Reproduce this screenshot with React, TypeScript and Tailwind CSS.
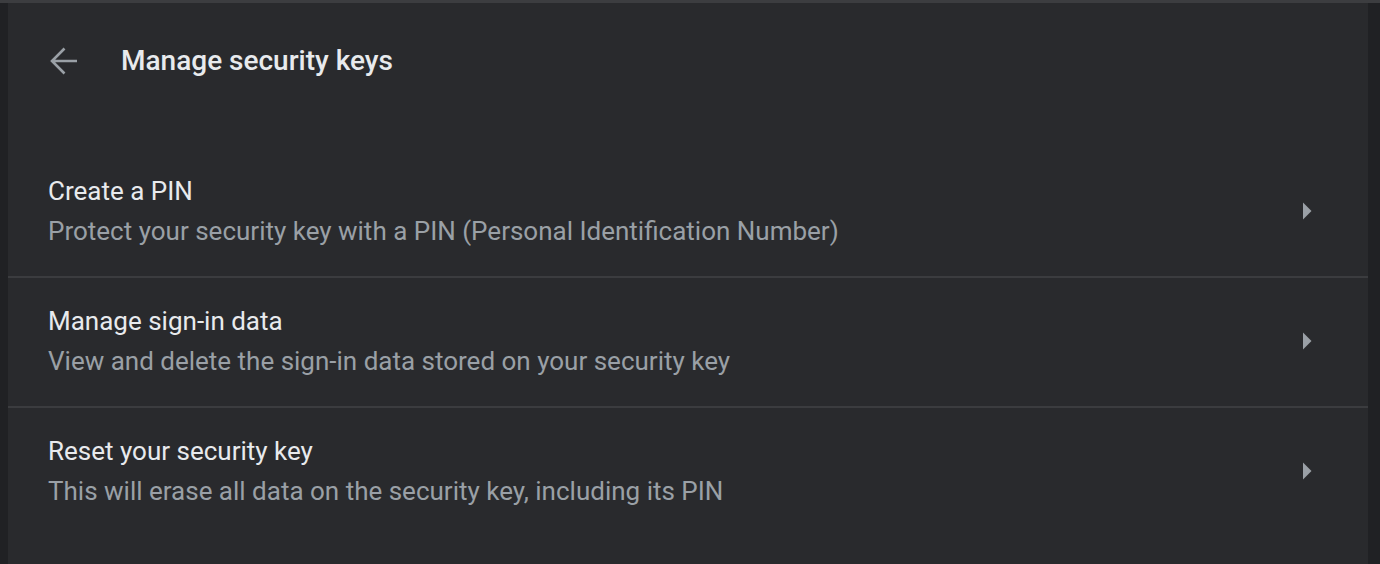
import React from "react";

const rows = [
  {
    title: "Create a PIN",
    sub: "Protect your security key with a PIN (Personal Identification Number)",
  },
  {
    title: "Manage sign-in data",
    sub: "View and delete the sign-in data stored on your security key",
  },
  {
    title: "Reset your security key",
    sub: "This will erase all data on the security key, including its PIN",
  },
];

function Caret() {
  return (
    <svg width="10" height="18" viewBox="0 0 10 18" className="text-[#9aa0a6]">
      <path d="M1 0.5 L9.5 9 L1 17.5 Z" fill="currentColor" />
    </svg>
  );
}

export default function App() {
  return (
    <div
      className="flex h-[564px] w-[1380px] flex-col overflow-hidden bg-[#202124]"
      style={{ fontFamily: "Roboto, 'Liberation Sans', sans-serif" }}
    >
      <div className="h-[3px] bg-[#3c3d40]" />
      <div className="flex flex-1 pl-[8px] pr-[12px]">
        <div className="flex flex-1 flex-col bg-[#292a2d]">
          <div className="flex h-[116px] items-center">
            <button className="ml-[36px] flex h-[40px] w-[40px] items-center justify-center text-[#9aa0a6]">
              <svg width="30" height="30" viewBox="0 0 30 30" fill="none" stroke="currentColor" strokeWidth="2.6">
                <path d="M28 15H3.5M15.5 2.5L3 15l12.5 12.5" />
              </svg>
            </button>
            <h1 className="ml-[37px] text-[28px] font-medium text-[#e8eaed]">
              Manage security keys
            </h1>
          </div>
          <div className="mt-[27px] flex flex-col">
            {rows.map((r, i) => (
              <div
                key={r.title}
                className={
                  "flex h-[130px] items-center pl-[40px] pr-[56px] " +
                  (i > 0 ? "border-t-2 border-[#3b3c3f] pb-[2px]" : "")
                }
              >
                <div className="flex flex-1 flex-col gap-[10px]">
                  <div className="text-[26px] leading-[30px] text-[#e8eaed]">{r.title}</div>
                  <div className="text-[26px] leading-[30px] text-[#9aa0a6]">{r.sub}</div>
                </div>
                <Caret />
              </div>
            ))}
          </div>
        </div>
      </div>
    </div>
  );
}
